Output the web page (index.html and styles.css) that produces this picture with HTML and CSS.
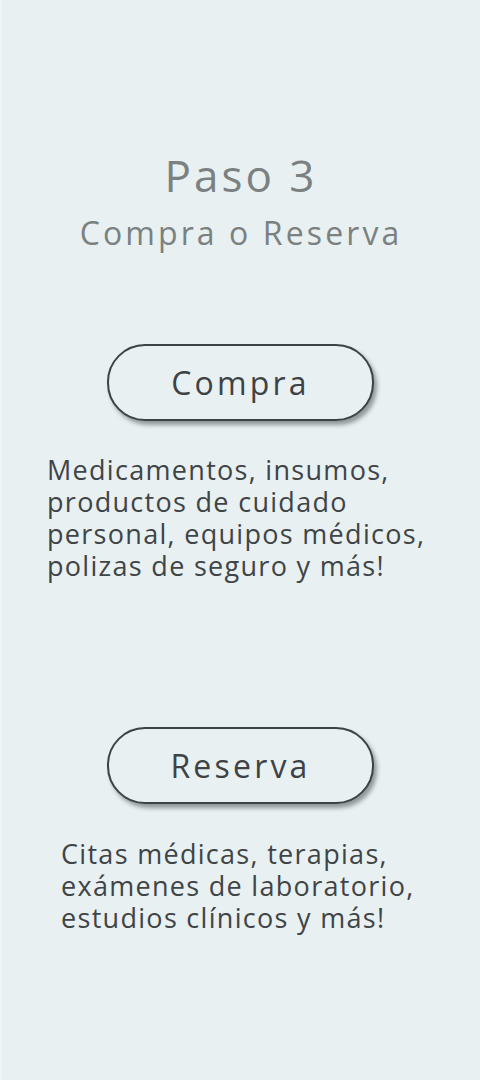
FILE: index.html
```html
<!DOCTYPE html>
<html lang="es">
<head>
<meta charset="utf-8">
<link rel="stylesheet" href="styles.css">
</head>
<body>
<main class="page">
  <header class="head">
    <h1 class="title">Paso 3</h1>
    <p class="subtitle">Compra o Reserva</p>
  </header>
  <section class="block block-buy">
    <button class="pill">Compra</button>
    <p class="desc desc-buy">Medicamentos, insumos, productos de cuidado personal, equipos médicos, polizas de seguro y más!</p>
  </section>
  <section class="block block-book">
    <button class="pill">Reserva</button>
    <p class="desc desc-book">Citas médicas, terapias, exámenes de laboratorio, estudios clínicos y más!</p>
  </section>
</main>
</body>
</html>
```

FILE: styles.css
```css
html, body {
  margin: 0;
  padding: 0;
}
body {
  background: #e8f0f2;
  font-family: "Open Sans", "Lato", sans-serif;
  width: 480px;
  height: 1080px;
  overflow: hidden;
}
.page {
  display: flex;
  flex-direction: column;
  height: 1080px;
  border-left: 2px solid #eef5f6;
  box-sizing: border-box;
}
.head {
  display: flex;
  flex-direction: column;
  align-items: center;
  padding-top: 146px;
}
.title {
  margin: 0;
  font-size: 44px;
  font-weight: 500;
  line-height: 58px;
  letter-spacing: 3px;
  color: #7b8081;
}
.subtitle {
  margin: 7px 0 0;
  font-size: 32px;
  line-height: 44px;
  letter-spacing: 3.1px;
  color: #7b8081;
}
.block {
  display: flex;
  flex-direction: column;
}
.block-buy {
  padding-top: 89px;
}
.block-book {
  padding-top: 145px;
}
.pill {
  align-self: flex-start;
  margin-left: 105px;
  width: 267px;
  height: 77px;
  border: 2px solid #3d4345;
  border-radius: 38px;
  background: #e9f0f2;
  box-shadow: 3px 4px 4px rgba(40, 45, 48, 0.45);
  font-family: inherit;
  font-size: 32px;
  letter-spacing: 3.2px;
  color: #3d4345;
  padding: 0;
}
.desc {
  margin: 0;
  font-size: 27px;
  line-height: 32px;
  letter-spacing: 1.3px;
  color: #3f4446;
}
.desc-buy {
  margin-top: 33px;
  padding-left: 45px;
  width: 404px;
}
.desc-book {
  margin-top: 34px;
  padding-left: 59px;
  width: 390px;
}
```
